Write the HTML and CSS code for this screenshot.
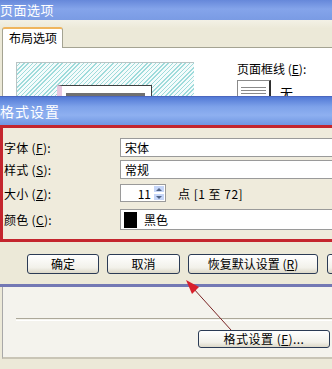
FILE: index.html
```html
<!DOCTYPE html>
<html lang="zh">
<head>
<meta charset="utf-8">
<link rel="stylesheet" href="styles.css">
</head>
<body>
<div class="screen">
  <section class="win win-page">
    <div class="title t1"><span>页面选项</span></div>
    <div class="tabs"><div class="tab">布局选项</div><div class="tabfill"></div></div>
    <div class="panel">
      <div class="hatch"><div class="pg"><div class="pgbar"></div></div></div>
      <div class="frameopt">
        <div class="flbl">页面框线 (<u>E</u>):</div>
        <div class="frow"><div class="fbox"><i></i><i></i><i></i></div><span class="none">无</span></div>
      </div>
    </div>
  </section>

  <section class="win win-fmt">
    <div class="title t2"><span>格式设置</span></div>
    <div class="redbox">
      <div class="row r1"><label>字体 (<u>F</u>):</label><div class="field">宋体</div></div>
      <div class="row r2"><label>样式 (<u>S</u>):</label><div class="field">常规</div></div>
      <div class="row r3"><label>大小 (<u>Z</u>):</label>
        <div class="sizewrap">
          <div class="spin"><span class="num">11</span><span class="arrows"><b class="up"></b><b class="dn"></b></span></div>
          <span class="pt">点 [1 至 72]</span>
        </div>
      </div>
      <div class="row r4"><label>颜色 (<u>C</u>):</label><div class="field color"><span class="sw"></span>黑色</div></div>
    </div>
    <div class="btns">
      <button class="btn b1">确定</button>
      <button class="btn b2">取消</button>
      <button class="btn b3">恢复默认设置 (<u>R</u>)</button>
      <button class="btn b4"></button>
    </div>
  </section>

  <section class="win win-bottom">
    <div class="bpanel">
      <div class="hr"></div>
      <div class="brow"><button class="btn b5">格式设置 (<u>F</u>)...</button></div>
    </div>
  </section>

  <svg class="arrow" width="332" height="369" viewBox="0 0 332 369">
    <line x1="231" y1="330" x2="193" y2="288" stroke="#7a2424" stroke-width="1"/>
    <polygon points="186,280 199,287 192,294" fill="#d8202c"/>
  </svg>
</div>
</body>
</html>
```

FILE: styles.css
```css
html, body {
  margin: 0;
  padding: 0;
}
body {
  width: 332px;
  height: 369px;
  overflow: hidden;
  background: #ece9d8;
  font-family: "Noto Sans CJK SC", "Liberation Sans", sans-serif;
  font-size: 12px;
  color: #000;
}
.screen {
  position: relative;
  width: 332px;
  height: 369px;
  overflow: hidden;
}
u { text-decoration: underline; }

/* ---------- page options window ---------- */
.win-page {
  height: 96px;
  overflow: hidden;
  background: #ece9d8;
}
.title {
  color: #fff;
  white-space: nowrap;
  overflow: hidden;
}
.t1 {
  height: 20px;
  line-height: 20px;
  font-size: 13px;
  padding-left: 0;
  letter-spacing: 0.5px;
  background: linear-gradient(#6688da, #84a4ea 45%, #7a9be4 100%);
}
.tabs {
  height: 28px;
  display: flex;
  align-items: flex-end;
  padding-left: 2px;
  background: linear-gradient(#f3f1e6, #ece9d8 30%);
  box-sizing: border-box;
}
.tab {
  width: 61px;
  height: 21px;
  box-sizing: border-box;
  background: #fff;
  border: 1px solid #a4a392;
  border-top: 2px solid #efb55e;
  border-bottom: none;
  border-radius: 3px 3px 0 0;
  padding-left: 6px;
  line-height: 18px;
  font-size: 12px;
}
.tabfill {
  flex: 1;
  height: 1px;
  background: #a4a392;
}
.panel {
  height: 48px;
  margin-left: 2px;
  border-left: 1px solid #a4a392;
  background: #fff;
  display: flex;
  padding-top: 14px;
  box-sizing: border-box;
}
.hatch {
  margin-left: 13px;
  width: 178px;
  height: 40px;
  box-sizing: border-box;
  border-top: 1px solid #b9c4c4;
  border-left: 1px solid #b9c4c4;
  background: repeating-linear-gradient(-45deg, #9edbdb 0 1px, #f4fbfb 1px 3px);
  padding-left: 40px;
  padding-top: 22px;
}
.pg {
  width: 95px;
  height: 20px;
  box-sizing: border-box;
  background: #fff;
  border: 1px solid #404040;
  border-left: 5px solid #e8c8e0;
  padding: 7px 6px 0 4px;
}
.pgbar {
  height: 3px;
  background: #707070;
}
.frameopt {
  margin-left: 43px;
}
.flbl {
  line-height: 14px;
  white-space: nowrap;
}
.frow {
  margin-top: 4px;
  display: flex;
  align-items: flex-start;
}
.fbox {
  width: 34px;
  height: 22px;
  box-sizing: border-box;
  border: 1px solid #8a8a8a;
  border-right: 2px solid #303030;
  background: #fff;
  padding: 6px 3px 0 3px;
}
.fbox i {
  display: block;
  height: 1px;
  margin-bottom: 2px;
  background: #8a8a8a;
}
.none {
  margin-left: 9px;
  margin-top: 6px;
  line-height: 14px;
  font-size: 13px;
}

/* ---------- format settings window ---------- */
.win-fmt {
  border-top: 1px solid #4b67bf;
  border-bottom: 3px solid #7378b4;
  padding-bottom: 10px;
  background: #ece9d8;
}
.t2 {
  height: 28px;
  line-height: 28px;
  font-size: 14px;
  padding-left: 0;
  letter-spacing: 1px;
  background: linear-gradient(#5279d6, #7ea2ea 35%, #8eb0f0 65%, #7096e2 100%);
}
.redbox {
  margin-right: -12px;
  border: 3px solid #c4262e;
  border-right: none;
  height: 117px;
  box-sizing: border-box;
  padding: 10px 0 0 1px;
  background: #efebdc;
  display: grid;
  grid-template-columns: 116px 1fr;
  grid-template-rows: 19px 19px 20px 25px;
  row-gap: 3px;
}
.row {
  display: contents;
}
.r3 label, .r3 .sizewrap { margin-top: 2px; }
.r4 label, .r4 .field { margin-top: 4px; }
.row label {
  display: flex;
  align-items: center;
  white-space: nowrap;
  letter-spacing: 0.3px;
}
.field {
  background: #fff;
  border: 1px solid #9a9a9a;
  border-right: none;
  box-sizing: border-box;
  padding-left: 4px;
  display: flex;
  align-items: center;
  white-space: nowrap;
}
.sizewrap {
  display: flex;
  align-items: stretch;
}
.spin {
  width: 46px;
  box-sizing: border-box;
  background: #fff;
  border: 1px solid #9a9a9a;
  display: flex;
  justify-content: flex-end;
  align-items: center;
}
.num {
  margin-right: 2px;
}
.arrows {
  width: 12px;
  height: 100%;
  display: flex;
  flex-direction: column;
}
.arrows b {
  flex: 1;
  background: #c6d6f8;
  border: 1px solid #fff;
  position: relative;
}
.arrows .up::after, .arrows .dn::after {
  content: "";
  position: absolute;
  left: 2px;
  border-left: 3px solid transparent;
  border-right: 3px solid transparent;
}
.arrows .up::after { top: 2px; border-bottom: 3px solid #4d6185; }
.arrows .dn::after { top: 2px; border-top: 3px solid #4d6185; }
.pt {
  margin-left: 12px;
  display: flex;
  align-items: center;
  white-space: nowrap;
  letter-spacing: 0.5px;
}
.color {
  padding-left: 3px;
}
.sw {
  width: 13px;
  height: 16px;
  background: #000;
  margin-right: 7px;
}

.btns {
  display: flex;
  gap: 8px;
  padding-left: 27px;
  margin-top: 12px;
  white-space: nowrap;
}
.btn {
  font-family: "Noto Sans CJK SC", "Liberation Sans", sans-serif;
  font-size: 12px;
  height: 20px;
  padding: 0;
  line-height: 18px;
  box-sizing: border-box;
  border: 1px solid #2b3b55;
  border-radius: 3px;
  background: linear-gradient(#ffffff, #f2f1ea 70%, #dcd8c8);
  color: #000;
  flex: none;
}
.b1 { width: 72px; }
.b2 { width: 73px; }
.b3 { width: 130px; margin-right: 1px; }
.b4 { width: 60px; }

/* ---------- bottom window ---------- */
.win-bottom {
  height: 82px;
  background: #ece9d8;
}
.bpanel {
  height: 72px;
  margin-left: 2px;
  border-left: 1px solid #a8a8a8;
  border-bottom: 2px solid #c9c5b6;
  box-sizing: border-box;
  background: #f4f3ed;
  padding-top: 31px;
}
.hr {
  margin-left: 13px;
  height: 1px;
  border-top: 1px solid #aca899;
  border-bottom: 1px solid #fff;
}
.brow {
  margin-top: 9px;
  padding-left: 195px;
}
.b5 {
  width: 132px;
  height: 18px;
  line-height: 16px;
  letter-spacing: 0.5px;
}

.arrow {
  position: absolute;
  left: 0;
  top: 0;
  pointer-events: none;
}
```
